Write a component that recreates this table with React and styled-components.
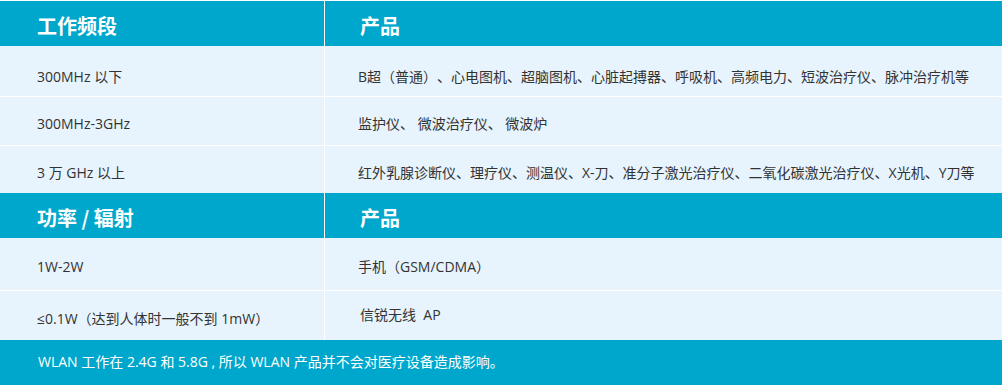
import React from 'react';
import styled, { createGlobalStyle } from 'styled-components';

const GlobalStyle = createGlobalStyle`
    html, body {
        margin: 0;
        padding: 0;
        background: #ffffff;
    }
    body {
        font-family: "Open Sans", "Noto Sans CJK SC", sans-serif;
        color: #333333;
        text-spacing-trim: space-all;
    }
`;

export const Table = styled.div`
    width: 1002px;
    height: 385px;
    padding-top: 1px;
    box-sizing: border-box;
    display: flex;
    flex-direction: column;
    background: #ffffff;
    overflow: hidden;
`;

export const Row = styled.div`
    display: grid;
    grid-template-columns: 324px 1fr;
    column-gap: 1px;
    background: #ffffff;
    height: ${(p) => p.h}px;
    margin-top: ${(p) => (p.sep ? 1 : 0)}px;
`;

export const HeadCell = styled.div`
    background: #00a7cc;
    color: #ffffff;
    font-family: "Noto Sans CJK SC", sans-serif;
    font-weight: 700;
    font-size: 20px;
    display: flex;
    align-items: center;
    padding: 4px 0 0 ${(p) => p.pl}px;
    box-sizing: border-box;
`;

export const Cell = styled.div`
    background: #e7f4fd;
    font-size: 14px;
    display: flex;
    align-items: center;
    padding: ${(p) => p.pt || 4}px 0 0 ${(p) => p.pl}px;
    box-sizing: border-box;
    white-space: nowrap;
`;

export const Footer = styled.div`
    background: #00a7cc;
    color: #ffffff;
    font-size: 14px;
    height: 45px;
    display: flex;
    align-items: center;
    padding: 0 0 4px 38px;
    box-sizing: border-box;
`;

const rows1 = [
    { h: 50, pt: 9, a: '300MHz 以下', b: 'B超（普通）、心电图机、超脑图机、心脏起搏器、呼吸机、高频电力、短波治疗仪、脉冲治疗机等' },
    { h: 48, pt: 4, a: '300MHz-3GHz', b: '监护仪、 微波治疗仪、 微波炉' },
    { h: 47, pt: 5, a: '3 万 GHz 以上', b: '红外乳腺诊断仪、理疗仪、测温仪、X-刀、准分子激光治疗仪、二氧化碳激光治疗仪、X光机、Y刀等' },
];

const App = () => (
    <>
        <GlobalStyle />
        <Table>
            <Row h={45}>
                <HeadCell pl={37}>工作频段</HeadCell>
                <HeadCell pl={35}>产品</HeadCell>
            </Row>
            {rows1.map((r, i) => (
                <Row key={r.a} h={r.h} sep={i > 0}>
                    <Cell pl={37} pt={r.pt}>{r.a}</Cell>
                    <Cell pl={33} pt={r.pt}>{r.b}</Cell>
                </Row>
            ))}
            <Row h={45}>
                <HeadCell pl={37}>功率 / 辐射</HeadCell>
                <HeadCell pl={35}>产品</HeadCell>
            </Row>
            <Row h={52}>
                <Cell pl={37} pt={4}>1W-2W</Cell>
                <Cell pl={33} pt={4}>手机（GSM/CDMA）</Cell>
            </Row>
            <Row h={49} sep>
                <Cell pl={37} pt={4}>≤0.1W（达到人体时一般不到 1mW）</Cell>
                <Cell pl={35} pt={0}>
                    <span style={{ marginTop: -8 }}>信锐无线&nbsp;&nbsp;AP</span>
                </Cell>
            </Row>
            <Footer>WLAN 工作在 2.4G 和 5.8G , 所以 WLAN 产品并不会对医疗设备造成影响。</Footer>
        </Table>
    </>
);

export default App;
